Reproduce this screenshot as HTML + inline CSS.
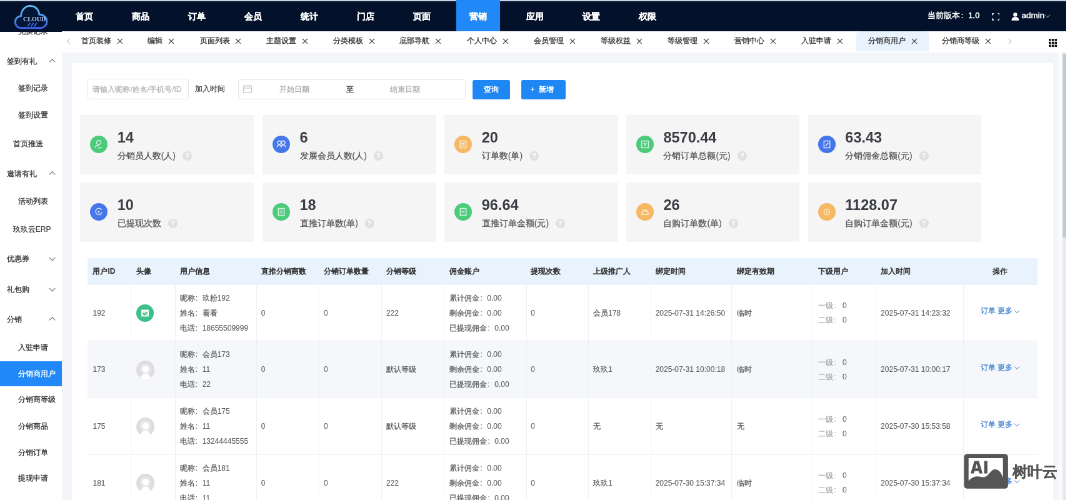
<!DOCTYPE html><html><head><meta charset="utf-8"><style>
*{margin:0;padding:0;box-sizing:border-box}
html,body{width:1066px;height:500px;overflow:hidden;background:#f3f5f9;font-family:"Liberation Sans",sans-serif;color:#333}
#root{will-change:transform;position:absolute;left:0;top:0;width:1706px;height:800px;transform:scale(0.625);transform-origin:0 0;overflow:hidden}
.b{position:absolute}
.t{position:absolute;white-space:nowrap;-webkit-text-stroke:0.1px currentColor}
.c{-webkit-text-stroke:0.3px currentColor}
.bd .c{-webkit-text-stroke:0}
.hd .c{-webkit-text-stroke:0.6px currentColor}
.cl{display:inline-block;width:1em;padding-left:0.1em}
</style></head><body><div id="root">
<div class="b" style="left:0px;top:50.4px;width:99.2px;height:749.6px;background:#fff"></div>
<div class="t " style="left:28.80px;top:39.60px;font-size:12px;line-height:20px;color:#333;"><span class="c">兑换记录</span></div>
<div class="t " style="left:10.56px;top:87.60px;font-size:12px;line-height:20px;color:#333;"><span class="c">签到有礼</span></div>
<div class="b" style="left:79.52px;top:94.88px;width:7.36px;height:7.36px;border-right:1.4px solid #666;border-bottom:1.4px solid #666;transform:rotate(-135deg)"></div>
<div class="t " style="left:28.80px;top:130.80px;font-size:12px;line-height:20px;color:#333;"><span class="c">签到记录</span></div>
<div class="t " style="left:28.80px;top:174.00px;font-size:12px;line-height:20px;color:#333;"><span class="c">签到设置</span></div>
<div class="t " style="left:20.80px;top:219.76px;font-size:12px;line-height:20px;color:#333;"><span class="c">首页推送</span></div>
<div class="t " style="left:10.56px;top:267.76px;font-size:12px;line-height:20px;color:#333;"><span class="c">邀请有礼</span></div>
<div class="b" style="left:79.52px;top:275.04px;width:7.36px;height:7.36px;border-right:1.4px solid #666;border-bottom:1.4px solid #666;transform:rotate(-135deg)"></div>
<div class="t " style="left:28.80px;top:311.60px;font-size:12px;line-height:20px;color:#333;"><span class="c">活动列表</span></div>
<div class="t " style="left:20.80px;top:357.04px;font-size:12px;line-height:20px;color:#333;"><span class="c">玖玖云</span>ERP</div>
<div class="t " style="left:10.56px;top:404.40px;font-size:12px;line-height:20px;color:#333;"><span class="c">优惠券</span></div>
<div class="b" style="left:79.52px;top:409.28px;width:7.36px;height:7.36px;border-right:1.4px solid #666;border-bottom:1.4px solid #666;transform:rotate(45deg)"></div>
<div class="t " style="left:10.56px;top:453.36px;font-size:12px;line-height:20px;color:#333;"><span class="c">礼包购</span></div>
<div class="b" style="left:79.52px;top:458.24px;width:7.36px;height:7.36px;border-right:1.4px solid #666;border-bottom:1.4px solid #666;transform:rotate(45deg)"></div>
<div class="t " style="left:10.56px;top:501.04px;font-size:12px;line-height:20px;color:#333;"><span class="c">分销</span></div>
<div class="b" style="left:79.52px;top:508.32px;width:7.36px;height:7.36px;border-right:1.4px solid #666;border-bottom:1.4px solid #666;transform:rotate(-135deg)"></div>
<div class="t " style="left:28.80px;top:546.16px;font-size:12px;line-height:20px;color:#333;"><span class="c">入驻申请</span></div>
<div class="b" style="left:0px;top:577.6px;width:98.56px;height:40.64px;background:#2189f7"></div>
<div class="t " style="left:28.80px;top:587.76px;font-size:12px;line-height:20px;color:#fff;"><span class="c">分销商用户</span></div>
<div class="t " style="left:28.80px;top:629.20px;font-size:12px;line-height:20px;color:#333;"><span class="c">分销商等级</span></div>
<div class="t " style="left:28.80px;top:671.60px;font-size:12px;line-height:20px;color:#333;"><span class="c">分销商品</span></div>
<div class="t " style="left:28.80px;top:713.84px;font-size:12px;line-height:20px;color:#333;"><span class="c">分销订单</span></div>
<div class="t " style="left:28.80px;top:755.44px;font-size:12px;line-height:20px;color:#333;"><span class="c">提现申请</span></div>
<div class="b" style="left:0px;top:0px;width:1705.6px;height:50.88px;background:#03112a"></div>
<div class="b" style="left:0px;top:0px;width:1705.6px;height:1.6px;background:#c8d2e2"></div>
<div class="t" style="left:99.68px;top:0.96px;width:70.4px;height:50.4px;line-height:50.4px;font-size:14px;font-weight:bold;-webkit-text-stroke:0.3px #fff;color:#fff;text-align:center">首页</div>
<div class="t" style="left:189.76px;top:0.96px;width:70.4px;height:50.4px;line-height:50.4px;font-size:14px;font-weight:bold;-webkit-text-stroke:0.3px #fff;color:#fff;text-align:center">商品</div>
<div class="t" style="left:279.84px;top:0.96px;width:70.4px;height:50.4px;line-height:50.4px;font-size:14px;font-weight:bold;-webkit-text-stroke:0.3px #fff;color:#fff;text-align:center">订单</div>
<div class="t" style="left:369.92px;top:0.96px;width:70.4px;height:50.4px;line-height:50.4px;font-size:14px;font-weight:bold;-webkit-text-stroke:0.3px #fff;color:#fff;text-align:center">会员</div>
<div class="t" style="left:460px;top:0.96px;width:70.4px;height:50.4px;line-height:50.4px;font-size:14px;font-weight:bold;-webkit-text-stroke:0.3px #fff;color:#fff;text-align:center">统计</div>
<div class="t" style="left:550.08px;top:0.96px;width:70.4px;height:50.4px;line-height:50.4px;font-size:14px;font-weight:bold;-webkit-text-stroke:0.3px #fff;color:#fff;text-align:center">门店</div>
<div class="t" style="left:640.16px;top:0.96px;width:70.4px;height:50.4px;line-height:50.4px;font-size:14px;font-weight:bold;-webkit-text-stroke:0.3px #fff;color:#fff;text-align:center">页面</div>
<div class="b" style="left:729.6px;top:0px;width:70.4px;height:50.88px;background:#2189f7"></div>
<div class="t" style="left:730.24px;top:0.96px;width:70.4px;height:50.4px;line-height:50.4px;font-size:14px;font-weight:bold;-webkit-text-stroke:0.3px #fff;color:#fff;text-align:center">营销</div>
<div class="t" style="left:820.32px;top:0.96px;width:70.4px;height:50.4px;line-height:50.4px;font-size:14px;font-weight:bold;-webkit-text-stroke:0.3px #fff;color:#fff;text-align:center">应用</div>
<div class="t" style="left:910.4px;top:0.96px;width:70.4px;height:50.4px;line-height:50.4px;font-size:14px;font-weight:bold;-webkit-text-stroke:0.3px #fff;color:#fff;text-align:center">设置</div>
<div class="t" style="left:1000.48px;top:0.96px;width:70.4px;height:50.4px;line-height:50.4px;font-size:14px;font-weight:bold;-webkit-text-stroke:0.3px #fff;color:#fff;text-align:center">权限</div>
<svg class="b" style="left:20.8px;top:5.6px;width:57.6px;height:43.2px;" viewBox="0 0 36 27">
<defs><linearGradient id="lg" x1="0" y1="0" x2="0" y2="1"><stop offset="0" stop-color="#62c0f4"/><stop offset="0.6" stop-color="#4a8ff0"/><stop offset="1" stop-color="#3d62e8"/></linearGradient></defs>
<path d="M7.5 24.2 C4 24.2 2.1 21.2 2.1 18.2 C2.1 14.8 4.6 12.4 7.8 12.3 C8.2 6.2 12.2 2.1 17 2.1 C21.8 2.1 25.6 5.6 26.1 10.6 C30.6 10.8 33.7 13.7 33.7 17.6 C33.7 21.4 30.8 24.2 27.2 24.2 Z" fill="#0a1e4a" fill-opacity="0.35" stroke="url(#lg)" stroke-width="1.8"/>
<text x="10" y="17.8" font-family="Liberation Serif" font-weight="bold" font-size="6.2" fill="#b4cdf2" textLength="22.7" lengthAdjust="spacingAndGlyphs">CLOUD</text>
<path d="M14.5 22.5 L17 19 M17.8 22.8 L20.3 19.2 M21 22.8 L23.5 19.2" stroke="#3f6fe8" stroke-width="1.1"/>
</svg>
<div class="t  bd" style="left:1484.32px;top:15.28px;font-size:13px;line-height:20px;color:#fff;font-weight:bold;-webkit-text-stroke:0"><span class="c">当前版本</span><span class="cl">:</span><span style="font-weight:normal;-webkit-text-stroke:0.5px #fff">1.0</span></div>
<svg class="b" style="left:1586.56px;top:20.96px;width:12.8px;height:11.68px;" viewBox="0 0 8 7.3"><path d="M0.5 2.2V0.5H2.2M5.8 0.5H7.5V2.2M7.5 5.1V6.8H5.8M2.2 6.8H0.5V5.1" fill="none" stroke="#d5d9e0" stroke-width="1.1"/></svg>
<svg class="b" style="left:1617.6px;top:20px;width:12.8px;height:12.8px;" viewBox="0 0 8 8"><circle cx="4" cy="2.2" r="2" fill="#fff"/><path d="M0.3 8 C0.3 5 2 4.5 4 4.5 C6 4.5 7.7 5 7.7 8Z" fill="#fff"/></svg>
<div class="t " style="left:1634.40px;top:15.28px;font-size:13.5px;line-height:20px;color:#fff;-webkit-text-stroke:0.5px #fff">admin</div>
<div class="b" style="left:1672.8px;top:21.12px;width:6.4px;height:6.4px;border-right:1.2px solid #888;border-bottom:1.2px solid #888;transform:rotate(45deg)"></div>
<div class="b" style="left:99.2px;top:50.4px;width:1606.4px;height:33.6px;background:#fff"></div>
<div class="b" style="left:1370.4px;top:49.6px;width:115.2px;height:32.8px;background:#e8f3fe;border-radius:6px 6px 0 0"></div>
<div class="t " style="left:129.76px;top:55.28px;font-size:12px;line-height:20px;color:#333;"><span class="c">首页装修</span></div>
<svg class="b" style="left:186.56px;top:60.96px;width:9.92px;height:9.92px;" viewBox="0 0 10 10"><path d="M1 1L9 9M9 1L1 9" stroke="#444" stroke-width="1.2"/></svg>
<div class="t " style="left:236.00px;top:55.28px;font-size:12px;line-height:20px;color:#333;"><span class="c">编辑</span></div>
<svg class="b" style="left:268.8px;top:60.96px;width:9.92px;height:9.92px;" viewBox="0 0 10 10"><path d="M1 1L9 9M9 1L1 9" stroke="#444" stroke-width="1.2"/></svg>
<div class="t " style="left:319.52px;top:55.28px;font-size:12px;line-height:20px;color:#333;"><span class="c">页面列表</span></div>
<svg class="b" style="left:376.32px;top:60.96px;width:9.92px;height:9.92px;" viewBox="0 0 10 10"><path d="M1 1L9 9M9 1L1 9" stroke="#444" stroke-width="1.2"/></svg>
<div class="t " style="left:426.24px;top:55.28px;font-size:12px;line-height:20px;color:#333;"><span class="c">主题设置</span></div>
<svg class="b" style="left:483.04px;top:60.96px;width:9.92px;height:9.92px;" viewBox="0 0 10 10"><path d="M1 1L9 9M9 1L1 9" stroke="#444" stroke-width="1.2"/></svg>
<div class="t " style="left:533.44px;top:55.28px;font-size:12px;line-height:20px;color:#333;"><span class="c">分类模板</span></div>
<svg class="b" style="left:590.24px;top:60.96px;width:9.92px;height:9.92px;" viewBox="0 0 10 10"><path d="M1 1L9 9M9 1L1 9" stroke="#444" stroke-width="1.2"/></svg>
<div class="t " style="left:639.36px;top:55.28px;font-size:12px;line-height:20px;color:#333;"><span class="c">底部导航</span></div>
<svg class="b" style="left:696.16px;top:60.96px;width:9.92px;height:9.92px;" viewBox="0 0 10 10"><path d="M1 1L9 9M9 1L1 9" stroke="#444" stroke-width="1.2"/></svg>
<div class="t " style="left:747.36px;top:55.28px;font-size:12px;line-height:20px;color:#333;"><span class="c">个人中心</span></div>
<svg class="b" style="left:804.16px;top:60.96px;width:9.92px;height:9.92px;" viewBox="0 0 10 10"><path d="M1 1L9 9M9 1L1 9" stroke="#444" stroke-width="1.2"/></svg>
<div class="t " style="left:853.92px;top:55.28px;font-size:12px;line-height:20px;color:#333;"><span class="c">会员管理</span></div>
<svg class="b" style="left:910.72px;top:60.96px;width:9.92px;height:9.92px;" viewBox="0 0 10 10"><path d="M1 1L9 9M9 1L1 9" stroke="#444" stroke-width="1.2"/></svg>
<div class="t " style="left:961.12px;top:55.28px;font-size:12px;line-height:20px;color:#333;"><span class="c">等级权益</span></div>
<svg class="b" style="left:1017.92px;top:60.96px;width:9.92px;height:9.92px;" viewBox="0 0 10 10"><path d="M1 1L9 9M9 1L1 9" stroke="#444" stroke-width="1.2"/></svg>
<div class="t " style="left:1068.00px;top:55.28px;font-size:12px;line-height:20px;color:#333;"><span class="c">等级管理</span></div>
<svg class="b" style="left:1124.8px;top:60.96px;width:9.92px;height:9.92px;" viewBox="0 0 10 10"><path d="M1 1L9 9M9 1L1 9" stroke="#444" stroke-width="1.2"/></svg>
<div class="t " style="left:1174.72px;top:55.28px;font-size:12px;line-height:20px;color:#333;"><span class="c">营销中心</span></div>
<svg class="b" style="left:1231.52px;top:60.96px;width:9.92px;height:9.92px;" viewBox="0 0 10 10"><path d="M1 1L9 9M9 1L1 9" stroke="#444" stroke-width="1.2"/></svg>
<div class="t " style="left:1281.92px;top:55.28px;font-size:12px;line-height:20px;color:#333;"><span class="c">入驻申请</span></div>
<svg class="b" style="left:1338.72px;top:60.96px;width:9.92px;height:9.92px;" viewBox="0 0 10 10"><path d="M1 1L9 9M9 1L1 9" stroke="#444" stroke-width="1.2"/></svg>
<div class="t " style="left:1389.12px;top:55.28px;font-size:12px;line-height:20px;color:#333;"><span class="c">分销商用户</span></div>
<svg class="b" style="left:1457.92px;top:60.96px;width:9.92px;height:9.92px;" viewBox="0 0 10 10"><path d="M1 1L9 9M9 1L1 9" stroke="#444" stroke-width="1.2"/></svg>
<div class="t " style="left:1507.20px;top:55.28px;font-size:12px;line-height:20px;color:#333;"><span class="c">分销商等级</span></div>
<svg class="b" style="left:1576px;top:60.96px;width:9.92px;height:9.92px;" viewBox="0 0 10 10"><path d="M1 1L9 9M9 1L1 9" stroke="#444" stroke-width="1.2"/></svg>
<div class="b" style="left:108px;top:62.88px;width:6.4px;height:6.4px;border-left:1.2px solid #bbb;border-bottom:1.2px solid #bbb;transform:rotate(45deg)"></div>
<div class="b" style="left:1611.2px;top:62.88px;width:6.4px;height:6.4px;border-right:1.2px solid #bbb;border-top:1.2px solid #bbb;transform:rotate(45deg)"></div>
<svg class="b" style="left:1678.4px;top:62.4px;width:13.6px;height:13.6px;" viewBox="0 0 8.5 8.5"><rect x="0" y="0" width="2.2" height="2.2" fill="#111"/><rect x="3" y="0" width="2.2" height="2.2" fill="#111"/><rect x="6" y="0" width="2.2" height="2.2" fill="#111"/><rect x="0" y="3" width="2.2" height="2.2" fill="#111"/><rect x="3" y="3" width="2.2" height="2.2" fill="#111"/><rect x="6" y="3" width="2.2" height="2.2" fill="#111"/><rect x="0" y="6" width="2.2" height="2.2" fill="#111"/><rect x="3" y="6" width="2.2" height="2.2" fill="#111"/><rect x="6" y="6" width="2.2" height="2.2" fill="#111"/></svg>
<div class="b" style="left:1693.44px;top:83.52px;width:12.16px;height:716.48px;background:#f9fafc"></div>
<div class="b" style="left:1700.16px;top:83.52px;width:5.44px;height:716.48px;background:#e6e9ef"></div>
<div class="b" style="left:1700.48px;top:85.76px;width:5.12px;height:294.4px;background:#c3c8d2;border-radius:2px"></div>
<div class="b" style="left:114.56px;top:100.96px;width:1570.24px;height:704px;background:#fff"></div>
<div class="b" style="left:139.52px;top:126.4px;width:162.08px;height:32.32px;border:1px solid #e6e8ec;border-radius:3px"></div>
<div class="t " style="left:148.48px;top:133.36px;font-size:12px;line-height:20px;color:#b0b3b8;"><span class="c">请输入昵称</span>/<span class="c">姓名</span>/<span class="c">手机号</span>/ID</div>
<div class="t " style="left:312.00px;top:132.40px;font-size:12px;line-height:20px;color:#444;"><span class="c">加入时间</span></div>
<div class="b" style="left:381.12px;top:126.72px;width:364px;height:32.48px;border:1px solid #e6e8ec;border-radius:3px"></div>
<svg class="b" style="left:388.8px;top:136px;width:14.4px;height:12.8px;" viewBox="0 0 9 8"><rect x="0.5" y="0.8" width="8" height="6.7" fill="none" stroke="#c4c7cc" stroke-width="0.8"/><path d="M0.5 3H8.5M3 0V1.5M6 0V1.5" stroke="#c4c7cc" stroke-width="0.8"/></svg>
<div class="t " style="left:446.72px;top:133.36px;font-size:12px;line-height:20px;color:#aaa;"><span class="c">开始日期</span></div>
<div class="t " style="left:554.40px;top:133.36px;font-size:12px;line-height:20px;color:#333;"><span class="c">至</span></div>
<div class="t " style="left:624.32px;top:133.36px;font-size:12px;line-height:20px;color:#aaa;"><span class="c">结束日期</span></div>
<div class="t" style="left:755.68px;top:127.68px;width:59.84px;height:31.52px;background:#1f87f3;border-radius:3px;color:#fff;font-size:12px;font-weight:bold;-webkit-text-stroke:0;line-height:31.5px;text-align:center">查询</div>
<div class="t" style="left:834.4px;top:127.68px;width:70.4px;height:31.52px;padding-right:4px;background:#1f87f3;border-radius:3px;color:#fff;font-size:12px;font-weight:bold;-webkit-text-stroke:0;line-height:31.5px;text-align:center">+&nbsp;&nbsp;新增</div>
<div class="b" style="left:128.16px;top:184.16px;width:277.44px;height:94.88px;background:#f5f5f5"></div>
<svg class="b" style="left:144.16px;top:217.12px;width:28px;height:28px;" viewBox="0 0 18 18"><circle cx="9" cy="9" r="9" fill="#4ccb7b"/><circle cx="9" cy="7" r="2.2" stroke="rgba(255,255,255,0.75)" stroke-width="1" fill="none"/><path d="M5.5 12.5C5.5 10.5 7 9.8 9 9.8M8 12.5H12" stroke="rgba(255,255,255,0.75)" stroke-width="1" fill="none"/></svg>
<div class="t  bd" style="left:187.68px;top:205.16px;font-size:23.5px;line-height:30px;color:#3a3d44;font-weight:bold;-webkit-text-stroke:0">14</div>
<div class="t " style="left:187.68px;top:238.96px;font-size:14px;line-height:20px;color:#555;"><span class="c">分销员人数</span>(<span class="c">人</span>)<span style="display:inline-block;width:15px;height:15px;border-radius:50%;background:#e0e0e0;margin-left:11px;vertical-align:1px;color:#fff;font-size:11px;line-height:15px;text-align:center;font-weight:bold">?</span></div>
<div class="b" style="left:420px;top:184.16px;width:277.44px;height:94.88px;background:#f5f5f5"></div>
<svg class="b" style="left:436px;top:217.12px;width:28px;height:28px;" viewBox="0 0 18 18"><circle cx="9" cy="9" r="9" fill="#4677ea"/><circle cx="7" cy="7.2" r="1.8" stroke="rgba(255,255,255,0.75)" stroke-width="1" fill="none"/><circle cx="11" cy="7.2" r="1.8" stroke="rgba(255,255,255,0.75)" stroke-width="1" fill="none"/><path d="M4.5 12C4.8 10.3 5.8 9.6 7 9.6C8.2 9.6 9.2 10.3 9.5 12M8.5 12C8.8 10.3 9.8 9.6 11 9.6C12.2 9.6 13.2 10.3 13.5 12" stroke="rgba(255,255,255,0.75)" stroke-width="1" fill="none"/></svg>
<div class="t  bd" style="left:479.52px;top:205.16px;font-size:23.5px;line-height:30px;color:#3a3d44;font-weight:bold;-webkit-text-stroke:0">6</div>
<div class="t " style="left:479.52px;top:238.96px;font-size:14px;line-height:20px;color:#555;"><span class="c">发展会员人数</span>(<span class="c">人</span>)<span style="display:inline-block;width:15px;height:15px;border-radius:50%;background:#e0e0e0;margin-left:11px;vertical-align:1px;color:#fff;font-size:11px;line-height:15px;text-align:center;font-weight:bold">?</span></div>
<div class="b" style="left:711.2px;top:184.16px;width:277.44px;height:94.88px;background:#f5f5f5"></div>
<svg class="b" style="left:727.2px;top:217.12px;width:28px;height:28px;" viewBox="0 0 18 18"><circle cx="9" cy="9" r="9" fill="#f6b862"/><rect x="6" y="5.5" width="6" height="7" stroke="rgba(255,255,255,0.75)" stroke-width="1" fill="none"/><path d="M7.5 8H10.5M7.5 10H10.5" stroke="rgba(255,255,255,0.75)" stroke-width="1" fill="none"/></svg>
<div class="t  bd" style="left:770.72px;top:205.16px;font-size:23.5px;line-height:30px;color:#3a3d44;font-weight:bold;-webkit-text-stroke:0">20</div>
<div class="t " style="left:770.72px;top:238.96px;font-size:14px;line-height:20px;color:#555;"><span class="c">订单数</span>(<span class="c">单</span>)<span style="display:inline-block;width:15px;height:15px;border-radius:50%;background:#e0e0e0;margin-left:11px;vertical-align:1px;color:#fff;font-size:11px;line-height:15px;text-align:center;font-weight:bold">?</span></div>
<div class="b" style="left:1001.92px;top:184.16px;width:277.44px;height:94.88px;background:#f5f5f5"></div>
<svg class="b" style="left:1017.92px;top:217.12px;width:28px;height:28px;" viewBox="0 0 18 18"><circle cx="9" cy="9" r="9" fill="#4ccb7b"/><rect x="5.5" y="5.5" width="7" height="7" stroke="rgba(255,255,255,0.75)" stroke-width="1" fill="none"/><path d="M7.5 7.5L9 9L10.5 7.5M9 9V11" stroke="rgba(255,255,255,0.75)" stroke-width="1" fill="none"/></svg>
<div class="t  bd" style="left:1061.44px;top:205.16px;font-size:23.5px;line-height:30px;color:#3a3d44;font-weight:bold;-webkit-text-stroke:0">8570.44</div>
<div class="t " style="left:1061.44px;top:238.96px;font-size:14px;line-height:20px;color:#555;"><span class="c">分销订单总额</span>(<span class="c">元</span>)<span style="display:inline-block;width:15px;height:15px;border-radius:50%;background:#e0e0e0;margin-left:11px;vertical-align:1px;color:#fff;font-size:11px;line-height:15px;text-align:center;font-weight:bold">?</span></div>
<div class="b" style="left:1292.8px;top:184.16px;width:277.44px;height:94.88px;background:#f5f5f5"></div>
<svg class="b" style="left:1308.8px;top:217.12px;width:28px;height:28px;" viewBox="0 0 18 18"><circle cx="9" cy="9" r="9" fill="#4677ea"/><rect x="6" y="5.5" width="6" height="7" stroke="rgba(255,255,255,0.75)" stroke-width="1" fill="none"/><path d="M7.5 10.5L10.5 7.5" stroke="rgba(255,255,255,0.75)" stroke-width="1" fill="none"/></svg>
<div class="t  bd" style="left:1352.32px;top:205.16px;font-size:23.5px;line-height:30px;color:#3a3d44;font-weight:bold;-webkit-text-stroke:0">63.43</div>
<div class="t " style="left:1352.32px;top:238.96px;font-size:14px;line-height:20px;color:#555;"><span class="c">分销佣金总额</span>(<span class="c">元</span>)<span style="display:inline-block;width:15px;height:15px;border-radius:50%;background:#e0e0e0;margin-left:11px;vertical-align:1px;color:#fff;font-size:11px;line-height:15px;text-align:center;font-weight:bold">?</span></div>
<div class="b" style="left:128.16px;top:292.32px;width:277.44px;height:94.88px;background:#f5f5f5"></div>
<svg class="b" style="left:144.16px;top:325.28px;width:28px;height:28px;" viewBox="0 0 18 18"><circle cx="9" cy="9" r="9" fill="#4677ea"/><path d="M12 7A3.3 3.3 0 1 0 12.3 9.5" stroke="rgba(255,255,255,0.75)" stroke-width="1" fill="none"/><circle cx="9" cy="9" r="1" fill="rgba(255,255,255,0.8)"/></svg>
<div class="t  bd" style="left:187.68px;top:313.32px;font-size:23.5px;line-height:30px;color:#3a3d44;font-weight:bold;-webkit-text-stroke:0">10</div>
<div class="t " style="left:187.68px;top:347.12px;font-size:14px;line-height:20px;color:#555;"><span class="c">已提现次数</span><span style="display:inline-block;width:15px;height:15px;border-radius:50%;background:#e0e0e0;margin-left:11px;vertical-align:1px;color:#fff;font-size:11px;line-height:15px;text-align:center;font-weight:bold">?</span></div>
<div class="b" style="left:420px;top:292.32px;width:277.44px;height:94.88px;background:#f5f5f5"></div>
<svg class="b" style="left:436px;top:325.28px;width:28px;height:28px;" viewBox="0 0 18 18"><circle cx="9" cy="9" r="9" fill="#4ccb7b"/><rect x="6" y="5.5" width="6" height="7" stroke="rgba(255,255,255,0.75)" stroke-width="1" fill="none"/><path d="M7.5 8H10.5M7.5 10H10.5" stroke="rgba(255,255,255,0.75)" stroke-width="1" fill="none"/></svg>
<div class="t  bd" style="left:479.52px;top:313.32px;font-size:23.5px;line-height:30px;color:#3a3d44;font-weight:bold;-webkit-text-stroke:0">18</div>
<div class="t " style="left:479.52px;top:347.12px;font-size:14px;line-height:20px;color:#555;"><span class="c">直推订单数</span>(<span class="c">单</span>)<span style="display:inline-block;width:15px;height:15px;border-radius:50%;background:#e0e0e0;margin-left:11px;vertical-align:1px;color:#fff;font-size:11px;line-height:15px;text-align:center;font-weight:bold">?</span></div>
<div class="b" style="left:711.2px;top:292.32px;width:277.44px;height:94.88px;background:#f5f5f5"></div>
<svg class="b" style="left:727.2px;top:325.28px;width:28px;height:28px;" viewBox="0 0 18 18"><circle cx="9" cy="9" r="9" fill="#4ccb7b"/><rect x="6" y="5.5" width="6" height="7" stroke="rgba(255,255,255,0.75)" stroke-width="1" fill="none"/><path d="M7.5 8L9 9.5L10.5 8" stroke="rgba(255,255,255,0.75)" stroke-width="1" fill="none"/></svg>
<div class="t  bd" style="left:770.72px;top:313.32px;font-size:23.5px;line-height:30px;color:#3a3d44;font-weight:bold;-webkit-text-stroke:0">96.64</div>
<div class="t " style="left:770.72px;top:347.12px;font-size:14px;line-height:20px;color:#555;"><span class="c">直推订单金额</span>(<span class="c">元</span>)<span style="display:inline-block;width:15px;height:15px;border-radius:50%;background:#e0e0e0;margin-left:11px;vertical-align:1px;color:#fff;font-size:11px;line-height:15px;text-align:center;font-weight:bold">?</span></div>
<div class="b" style="left:1001.92px;top:292.32px;width:277.44px;height:94.88px;background:#f5f5f5"></div>
<svg class="b" style="left:1017.92px;top:325.28px;width:28px;height:28px;" viewBox="0 0 18 18"><circle cx="9" cy="9" r="9" fill="#f6b862"/><path d="M5.5 11.5H12.5L11.5 8H6.5Z" stroke="rgba(255,255,255,0.75)" stroke-width="1" fill="none"/><path d="M7.5 8C7.5 6.5 10.5 6.5 10.5 8" stroke="rgba(255,255,255,0.75)" stroke-width="1" fill="none"/></svg>
<div class="t  bd" style="left:1061.44px;top:313.32px;font-size:23.5px;line-height:30px;color:#3a3d44;font-weight:bold;-webkit-text-stroke:0">26</div>
<div class="t " style="left:1061.44px;top:347.12px;font-size:14px;line-height:20px;color:#555;"><span class="c">自购订单数</span>(<span class="c">单</span>)<span style="display:inline-block;width:15px;height:15px;border-radius:50%;background:#e0e0e0;margin-left:11px;vertical-align:1px;color:#fff;font-size:11px;line-height:15px;text-align:center;font-weight:bold">?</span></div>
<div class="b" style="left:1292.8px;top:292.32px;width:277.44px;height:94.88px;background:#f5f5f5"></div>
<svg class="b" style="left:1308.8px;top:325.28px;width:28px;height:28px;" viewBox="0 0 18 18"><circle cx="9" cy="9" r="9" fill="#f6b862"/><circle cx="9" cy="9" r="3" stroke="rgba(255,255,255,0.75)" stroke-width="1" fill="none"/><path d="M8 8L9 9L10 8M9 9V10.5" stroke="rgba(255,255,255,0.75)" stroke-width="1" fill="none"/></svg>
<div class="t  bd" style="left:1352.32px;top:313.32px;font-size:23.5px;line-height:30px;color:#3a3d44;font-weight:bold;-webkit-text-stroke:0">1128.07</div>
<div class="t " style="left:1352.32px;top:347.12px;font-size:14px;line-height:20px;color:#555;"><span class="c">自购订单金额</span>(<span class="c">元</span>)<span style="display:inline-block;width:15px;height:15px;border-radius:50%;background:#e0e0e0;margin-left:11px;vertical-align:1px;color:#fff;font-size:11px;line-height:15px;text-align:center;font-weight:bold">?</span></div>
<div class="b" style="left:140.32px;top:413.28px;width:1520px;height:42.4px;background:#e9f3fd"></div>
<div class="b" style="left:140.32px;top:455.68px;width:1520px;height:90.72px;background:#fff;border-bottom:1px solid #eef0f3"></div>
<div class="b" style="left:140.32px;top:546.08px;width:1520px;height:90.72px;background:#f5f7fa;border-bottom:1px solid #eef0f3"></div>
<div class="b" style="left:140.32px;top:637.12px;width:1520px;height:90.72px;background:#fff;border-bottom:1px solid #eef0f3"></div>
<div class="b" style="left:140.32px;top:727.84px;width:1520px;height:90.72px;background:#fff;border-bottom:1px solid #eef0f3"></div>
<div class="b" style="left:208.96px;top:455.68px;width:0.96px;height:368px;background:#eef1f5"></div>
<div class="b" style="left:280.32px;top:455.68px;width:0.96px;height:368px;background:#eef1f5"></div>
<div class="b" style="left:410.4px;top:455.68px;width:0.96px;height:368px;background:#eef1f5"></div>
<div class="b" style="left:509.6px;top:455.68px;width:0.96px;height:368px;background:#eef1f5"></div>
<div class="b" style="left:610.4px;top:455.68px;width:0.96px;height:368px;background:#eef1f5"></div>
<div class="b" style="left:710.24px;top:455.68px;width:0.96px;height:368px;background:#eef1f5"></div>
<div class="b" style="left:841.6px;top:455.68px;width:0.96px;height:368px;background:#eef1f5"></div>
<div class="b" style="left:941.28px;top:455.68px;width:0.96px;height:368px;background:#eef1f5"></div>
<div class="b" style="left:1041.12px;top:455.68px;width:0.96px;height:368px;background:#eef1f5"></div>
<div class="b" style="left:1170.4px;top:455.68px;width:0.96px;height:368px;background:#eef1f5"></div>
<div class="b" style="left:1300.48px;top:455.68px;width:0.96px;height:368px;background:#eef1f5"></div>
<div class="b" style="left:1401.44px;top:455.68px;width:0.96px;height:368px;background:#eef1f5"></div>
<div class="b" style="left:1540.64px;top:455.68px;width:0.96px;height:368px;background:#eef1f5"></div>
<div class="t hd" style="left:148.48px;top:424.08px;font-size:12px;line-height:20px;color:#333;"><span class="c">用户</span><b>ID</b></div>
<div class="t hd" style="left:217.92px;top:424.08px;font-size:12px;line-height:20px;color:#333;"><span class="c">头像</span></div>
<div class="t hd" style="left:287.68px;top:424.08px;font-size:12px;line-height:20px;color:#333;"><span class="c">用户信息</span></div>
<div class="t hd" style="left:417.76px;top:424.08px;font-size:12px;line-height:20px;color:#333;"><span class="c">直推分销商数</span></div>
<div class="t hd" style="left:518.08px;top:424.08px;font-size:12px;line-height:20px;color:#333;"><span class="c">分销订单数量</span></div>
<div class="t hd" style="left:617.92px;top:424.08px;font-size:12px;line-height:20px;color:#333;"><span class="c">分销等级</span></div>
<div class="t hd" style="left:719.36px;top:424.08px;font-size:12px;line-height:20px;color:#333;"><span class="c">佣金账户</span></div>
<div class="t hd" style="left:849.28px;top:424.08px;font-size:12px;line-height:20px;color:#333;"><span class="c">提现次数</span></div>
<div class="t hd" style="left:948.96px;top:424.08px;font-size:12px;line-height:20px;color:#333;"><span class="c">上级推广人</span></div>
<div class="t hd" style="left:1048.64px;top:424.08px;font-size:12px;line-height:20px;color:#333;"><span class="c">绑定时间</span></div>
<div class="t hd" style="left:1179.04px;top:424.08px;font-size:12px;line-height:20px;color:#333;"><span class="c">绑定有效期</span></div>
<div class="t hd" style="left:1308.96px;top:424.08px;font-size:12px;line-height:20px;color:#333;"><span class="c">下级用户</span></div>
<div class="t hd" style="left:1409.12px;top:424.08px;font-size:12px;line-height:20px;color:#333;"><span class="c">加入时间</span></div>
<div class="t" style="left:1540.64px;top:413.28px;width:119.68px;height:42.4px;line-height:42.4px;font-size:12px;font-weight:bold;-webkit-text-stroke:0;color:#333;text-align:center">操作</div>
<div class="t " style="left:148.48px;top:490.64px;font-size:12px;line-height:20px;color:#606266;">192</div>
<svg class="b" style="left:218.4px;top:486.72px;width:28px;height:28px;" viewBox="0 0 18 18"><circle cx="9" cy="9" r="9" fill="#3dbf8c"/><rect x="5.2" y="5.4" width="7.6" height="7.2" rx="0.5" fill="#fff"/><rect x="5.9" y="7.3" width="6.2" height="4.6" fill="#bfeedd"/><path d="M7.1 9.3L8.6 10.5L10.9 8.3" stroke="#2f9e70" stroke-width="1" fill="none"/></svg>
<div class="t " style="left:287.68px;top:466.64px;font-size:12px;line-height:20px;color:#606266;"><span class="c">昵称</span><span class="cl">:</span><span class="c">玖粉</span>192</div>
<div class="t " style="left:287.68px;top:490.64px;font-size:12px;line-height:20px;color:#606266;"><span class="c">姓名</span><span class="cl">:</span><span class="c">看看</span></div>
<div class="t " style="left:287.68px;top:514.64px;font-size:12px;line-height:20px;color:#606266;"><span class="c">电话</span><span class="cl">:</span>18655509999</div>
<div class="t " style="left:417.76px;top:490.64px;font-size:12px;line-height:20px;color:#606266;">0</div>
<div class="t " style="left:518.08px;top:490.64px;font-size:12px;line-height:20px;color:#606266;">0</div>
<div class="t " style="left:617.92px;top:490.64px;font-size:12px;line-height:20px;color:#606266;">222</div>
<div class="t " style="left:719.36px;top:466.64px;font-size:12px;line-height:20px;color:#606266;"><span class="c">累计佣金</span><span class="cl">:</span>0.00</div>
<div class="t " style="left:719.36px;top:490.64px;font-size:12px;line-height:20px;color:#606266;"><span class="c">剩余佣金</span><span class="cl">:</span>0.00</div>
<div class="t " style="left:719.36px;top:514.64px;font-size:12px;line-height:20px;color:#606266;"><span class="c">已提现佣金</span><span class="cl">:</span>0.00</div>
<div class="t " style="left:849.28px;top:490.64px;font-size:12px;line-height:20px;color:#606266;">0</div>
<div class="t " style="left:948.96px;top:490.64px;font-size:12px;line-height:20px;color:#606266;"><span class="c">会员</span>178</div>
<div class="t " style="left:1048.64px;top:490.64px;font-size:12px;line-height:20px;color:#606266;">2025-07-31 14:26:50</div>
<div class="t " style="left:1179.04px;top:490.64px;font-size:12px;line-height:20px;color:#606266;"><span class="c">临时</span></div>
<div class="t " style="left:1308.96px;top:479.12px;font-size:12px;line-height:20px;color:#a8a8a8;"><span class="c">一级</span><span class="cl">:</span></div>
<div class="t " style="left:1308.96px;top:502.32px;font-size:12px;line-height:20px;color:#a8a8a8;"><span class="c">二级</span><span class="cl">:</span></div>
<div class="t " style="left:1348.00px;top:479.12px;font-size:12px;line-height:20px;color:#666;">0</div>
<div class="t " style="left:1348.00px;top:502.32px;font-size:12px;line-height:20px;color:#666;">0</div>
<div class="t " style="left:1409.12px;top:490.64px;font-size:12px;line-height:20px;color:#606266;">2025-07-31 14:23:32</div>
<div class="t " style="left:1568.80px;top:487.44px;font-size:12px;line-height:20px;color:#3b7fd0;"><span class="c">订单</span> <span class="c">更多</span></div>
<div class="b" style="left:1623.68px;top:493.76px;width:6.4px;height:6.4px;border-right:1.1px solid #6f9fd8;border-bottom:1.1px solid #6f9fd8;transform:rotate(45deg)"></div>
<div class="t " style="left:148.48px;top:581.36px;font-size:12px;line-height:20px;color:#606266;">173</div>
<svg class="b" style="left:217.76px;top:576.8px;width:29.44px;height:29.44px;" viewBox="0 0 18.4 18.4"><circle cx="9.2" cy="9.2" r="9.2" fill="#dedee0"/><circle cx="9.2" cy="8.6" r="5.6" fill="#e8e8ea"/><circle cx="9.3" cy="8.3" r="3.3" fill="#fff"/><path d="M4.6 17.2C5.2 14.2 7 13 9.3 13C11.6 13 13.4 14.2 14 17.2C12.6 18 11 18.4 9.2 18.4C7.4 18.4 5.9 18 4.6 17.2Z" fill="#fff"/></svg>
<div class="t " style="left:287.68px;top:557.36px;font-size:12px;line-height:20px;color:#606266;"><span class="c">昵称</span><span class="cl">:</span><span class="c">会员</span>173</div>
<div class="t " style="left:287.68px;top:581.36px;font-size:12px;line-height:20px;color:#606266;"><span class="c">姓名</span><span class="cl">:</span>11</div>
<div class="t " style="left:287.68px;top:605.36px;font-size:12px;line-height:20px;color:#606266;"><span class="c">电话</span><span class="cl">:</span>22</div>
<div class="t " style="left:417.76px;top:581.36px;font-size:12px;line-height:20px;color:#606266;">0</div>
<div class="t " style="left:518.08px;top:581.36px;font-size:12px;line-height:20px;color:#606266;">0</div>
<div class="t " style="left:617.92px;top:581.36px;font-size:12px;line-height:20px;color:#606266;"><span class="c">默认等级</span></div>
<div class="t " style="left:719.36px;top:557.36px;font-size:12px;line-height:20px;color:#606266;"><span class="c">累计佣金</span><span class="cl">:</span>0.00</div>
<div class="t " style="left:719.36px;top:581.36px;font-size:12px;line-height:20px;color:#606266;"><span class="c">剩余佣金</span><span class="cl">:</span>0.00</div>
<div class="t " style="left:719.36px;top:605.36px;font-size:12px;line-height:20px;color:#606266;"><span class="c">已提现佣金</span><span class="cl">:</span>0.00</div>
<div class="t " style="left:849.28px;top:581.36px;font-size:12px;line-height:20px;color:#606266;">0</div>
<div class="t " style="left:948.96px;top:581.36px;font-size:12px;line-height:20px;color:#606266;"><span class="c">玖玖</span>1</div>
<div class="t " style="left:1048.64px;top:581.36px;font-size:12px;line-height:20px;color:#606266;">2025-07-31 10:00:18</div>
<div class="t " style="left:1179.04px;top:581.36px;font-size:12px;line-height:20px;color:#606266;"><span class="c">临时</span></div>
<div class="t " style="left:1308.96px;top:569.84px;font-size:12px;line-height:20px;color:#a8a8a8;"><span class="c">一级</span><span class="cl">:</span></div>
<div class="t " style="left:1308.96px;top:593.04px;font-size:12px;line-height:20px;color:#a8a8a8;"><span class="c">二级</span><span class="cl">:</span></div>
<div class="t " style="left:1348.00px;top:569.84px;font-size:12px;line-height:20px;color:#666;">0</div>
<div class="t " style="left:1348.00px;top:593.04px;font-size:12px;line-height:20px;color:#666;">0</div>
<div class="t " style="left:1409.12px;top:581.36px;font-size:12px;line-height:20px;color:#606266;">2025-07-31 10:00:17</div>
<div class="t " style="left:1568.80px;top:578.16px;font-size:12px;line-height:20px;color:#3b7fd0;"><span class="c">订单</span> <span class="c">更多</span></div>
<div class="b" style="left:1623.68px;top:584.48px;width:6.4px;height:6.4px;border-right:1.1px solid #6f9fd8;border-bottom:1.1px solid #6f9fd8;transform:rotate(45deg)"></div>
<div class="t " style="left:148.48px;top:672.08px;font-size:12px;line-height:20px;color:#606266;">175</div>
<svg class="b" style="left:217.76px;top:667.52px;width:29.44px;height:29.44px;" viewBox="0 0 18.4 18.4"><circle cx="9.2" cy="9.2" r="9.2" fill="#dedee0"/><circle cx="9.2" cy="8.6" r="5.6" fill="#e8e8ea"/><circle cx="9.3" cy="8.3" r="3.3" fill="#fff"/><path d="M4.6 17.2C5.2 14.2 7 13 9.3 13C11.6 13 13.4 14.2 14 17.2C12.6 18 11 18.4 9.2 18.4C7.4 18.4 5.9 18 4.6 17.2Z" fill="#fff"/></svg>
<div class="t " style="left:287.68px;top:648.08px;font-size:12px;line-height:20px;color:#606266;"><span class="c">昵称</span><span class="cl">:</span><span class="c">会员</span>175</div>
<div class="t " style="left:287.68px;top:672.08px;font-size:12px;line-height:20px;color:#606266;"><span class="c">姓名</span><span class="cl">:</span>11</div>
<div class="t " style="left:287.68px;top:696.08px;font-size:12px;line-height:20px;color:#606266;"><span class="c">电话</span><span class="cl">:</span>13244445555</div>
<div class="t " style="left:417.76px;top:672.08px;font-size:12px;line-height:20px;color:#606266;">0</div>
<div class="t " style="left:518.08px;top:672.08px;font-size:12px;line-height:20px;color:#606266;">0</div>
<div class="t " style="left:617.92px;top:672.08px;font-size:12px;line-height:20px;color:#606266;"><span class="c">默认等级</span></div>
<div class="t " style="left:719.36px;top:648.08px;font-size:12px;line-height:20px;color:#606266;"><span class="c">累计佣金</span><span class="cl">:</span>0.00</div>
<div class="t " style="left:719.36px;top:672.08px;font-size:12px;line-height:20px;color:#606266;"><span class="c">剩余佣金</span><span class="cl">:</span>0.00</div>
<div class="t " style="left:719.36px;top:696.08px;font-size:12px;line-height:20px;color:#606266;"><span class="c">已提现佣金</span><span class="cl">:</span>0.00</div>
<div class="t " style="left:849.28px;top:672.08px;font-size:12px;line-height:20px;color:#606266;">0</div>
<div class="t " style="left:948.96px;top:672.08px;font-size:12px;line-height:20px;color:#606266;"><span class="c">无</span></div>
<div class="t " style="left:1048.64px;top:672.08px;font-size:12px;line-height:20px;color:#606266;"><span class="c">无</span></div>
<div class="t " style="left:1179.04px;top:672.08px;font-size:12px;line-height:20px;color:#606266;"><span class="c">无</span></div>
<div class="t " style="left:1308.96px;top:660.56px;font-size:12px;line-height:20px;color:#a8a8a8;"><span class="c">一级</span><span class="cl">:</span></div>
<div class="t " style="left:1308.96px;top:683.76px;font-size:12px;line-height:20px;color:#a8a8a8;"><span class="c">二级</span><span class="cl">:</span></div>
<div class="t " style="left:1348.00px;top:660.56px;font-size:12px;line-height:20px;color:#666;">0</div>
<div class="t " style="left:1348.00px;top:683.76px;font-size:12px;line-height:20px;color:#666;">0</div>
<div class="t " style="left:1409.12px;top:672.08px;font-size:12px;line-height:20px;color:#606266;">2025-07-30 15:53:58</div>
<div class="t " style="left:1568.80px;top:668.88px;font-size:12px;line-height:20px;color:#3b7fd0;"><span class="c">订单</span> <span class="c">更多</span></div>
<div class="b" style="left:1623.68px;top:675.2px;width:6.4px;height:6.4px;border-right:1.1px solid #6f9fd8;border-bottom:1.1px solid #6f9fd8;transform:rotate(45deg)"></div>
<div class="t " style="left:148.48px;top:762.80px;font-size:12px;line-height:20px;color:#606266;">181</div>
<svg class="b" style="left:217.76px;top:758.24px;width:29.44px;height:29.44px;" viewBox="0 0 18.4 18.4"><circle cx="9.2" cy="9.2" r="9.2" fill="#dedee0"/><circle cx="9.2" cy="8.6" r="5.6" fill="#e8e8ea"/><circle cx="9.3" cy="8.3" r="3.3" fill="#fff"/><path d="M4.6 17.2C5.2 14.2 7 13 9.3 13C11.6 13 13.4 14.2 14 17.2C12.6 18 11 18.4 9.2 18.4C7.4 18.4 5.9 18 4.6 17.2Z" fill="#fff"/></svg>
<div class="t " style="left:287.68px;top:738.80px;font-size:12px;line-height:20px;color:#606266;"><span class="c">昵称</span><span class="cl">:</span><span class="c">会员</span>181</div>
<div class="t " style="left:287.68px;top:762.80px;font-size:12px;line-height:20px;color:#606266;"><span class="c">姓名</span><span class="cl">:</span>11</div>
<div class="t " style="left:287.68px;top:786.80px;font-size:12px;line-height:20px;color:#606266;"><span class="c">电话</span><span class="cl">:</span>11</div>
<div class="t " style="left:417.76px;top:762.80px;font-size:12px;line-height:20px;color:#606266;">0</div>
<div class="t " style="left:518.08px;top:762.80px;font-size:12px;line-height:20px;color:#606266;">0</div>
<div class="t " style="left:617.92px;top:762.80px;font-size:12px;line-height:20px;color:#606266;">222</div>
<div class="t " style="left:719.36px;top:738.80px;font-size:12px;line-height:20px;color:#606266;"><span class="c">累计佣金</span><span class="cl">:</span>0.00</div>
<div class="t " style="left:719.36px;top:762.80px;font-size:12px;line-height:20px;color:#606266;"><span class="c">剩余佣金</span><span class="cl">:</span>0.00</div>
<div class="t " style="left:719.36px;top:786.80px;font-size:12px;line-height:20px;color:#606266;"><span class="c">已提现佣金</span><span class="cl">:</span>0.00</div>
<div class="t " style="left:849.28px;top:762.80px;font-size:12px;line-height:20px;color:#606266;">0</div>
<div class="t " style="left:948.96px;top:762.80px;font-size:12px;line-height:20px;color:#606266;"><span class="c">玖玖</span>1</div>
<div class="t " style="left:1048.64px;top:762.80px;font-size:12px;line-height:20px;color:#606266;">2025-07-30 15:37:34</div>
<div class="t " style="left:1179.04px;top:762.80px;font-size:12px;line-height:20px;color:#606266;"><span class="c">临时</span></div>
<div class="t " style="left:1308.96px;top:751.28px;font-size:12px;line-height:20px;color:#a8a8a8;"><span class="c">一级</span><span class="cl">:</span></div>
<div class="t " style="left:1308.96px;top:774.48px;font-size:12px;line-height:20px;color:#a8a8a8;"><span class="c">二级</span><span class="cl">:</span></div>
<div class="t " style="left:1348.00px;top:751.28px;font-size:12px;line-height:20px;color:#666;">0</div>
<div class="t " style="left:1348.00px;top:774.48px;font-size:12px;line-height:20px;color:#666;">0</div>
<div class="t " style="left:1409.12px;top:762.80px;font-size:12px;line-height:20px;color:#606266;">2025-07-30 15:37:34</div>
<div class="t " style="left:1568.80px;top:759.60px;font-size:12px;line-height:20px;color:#3b7fd0;"><span class="c">订单</span> <span class="c">更多</span></div>
<div class="b" style="left:1623.68px;top:765.92px;width:6.4px;height:6.4px;border-right:1.1px solid #6f9fd8;border-bottom:1.1px solid #6f9fd8;transform:rotate(45deg)"></div>
<svg class="b" style="left:1542.08px;top:726.08px;width:71.04px;height:56.64px;" viewBox="0 0 44.4 35.4">
<rect x="0.2" y="0.2" width="44.1" height="34.7" rx="3.2" fill="#555"/>
<path d="M4.8 4.4H39.2V24C37.8 20.5 36.5 16 31.5 15.6C27.5 15.3 26 20.5 22 22.8C19 24.3 16.5 22.3 12.5 22.7C8.5 23.2 6 26 4.8 27Z" fill="#fff"/>
<path fill-rule="evenodd" d="M6.8 19.7L10.6 7.2H15.1L18.9 19.7H15.6L14.9 17.3H10.8L10.1 19.7ZM11.6 14.6H14.1L12.85 10.2Z" fill="#555"/>
<rect x="20.4" y="7.2" width="3.2" height="12.5" fill="#555"/>
</svg>
<div class="t" style="left:1620.16px;top:738.88px;font-size:23.5px;line-height:32px;color:#555;font-weight:bold;-webkit-text-stroke:0.25px #555">树叶云</div>
</div></body></html>
